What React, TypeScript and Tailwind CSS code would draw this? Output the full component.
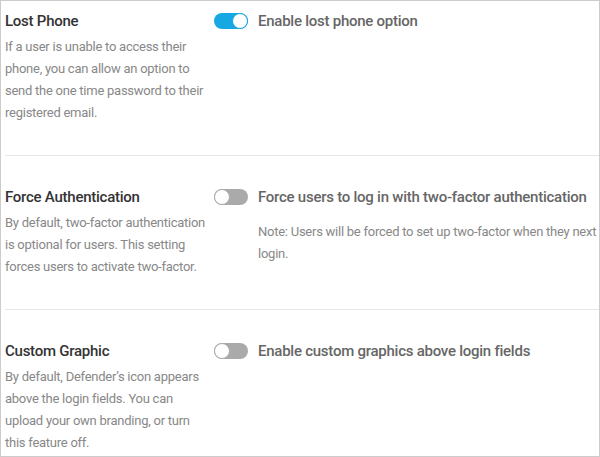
import React from "react";

function Toggle({ on }: { on: boolean }) {
  return (
    <div
      className={
        on
          ? "relative w-[34px] h-[16px] rounded-full bg-[#17a8e3] shrink-0 mt-[3px]"
          : "relative w-[34px] h-[16px] rounded-full bg-[#aaaaaa] shrink-0 mt-[3px]"
      }
    >
      <div
        className={
          on
            ? "absolute top-0 right-0 w-[16px] h-[16px] rounded-full bg-white border-[1.5px] border-[#17a8e3]"
            : "absolute top-0 left-0 w-[16px] h-[16px] rounded-full bg-white border-[1.5px] border-[#aaaaaa]"
        }
      />
    </div>
  );
}

function Row({
  title,
  desc,
  label,
  note,
  on,
  first,
  last,
}: {
  title: string;
  desc: string;
  label: string;
  note?: string;
  on: boolean;
  first?: boolean;
  last?: boolean;
}) {
  return (
    <div
      className={
        (first ? "pt-[9px] " : "pt-[30px] ") +
        (last ? "pb-[31px] " : "pb-[31px] border-b border-[#e6e6e6] ") +
        "flex"
      }
    >
      <div className="w-[204px] shrink-0 mr-[5px]">
        <div className="text-[15px] leading-[22px] font-medium tracking-[-0.25px] text-[#333333]">{title}</div>
        <div className="mt-[4px] text-[13px] leading-[22px] tracking-[-0.25px] text-[#888888]">{desc}</div>
      </div>
      <div className="flex-1 flex items-start gap-[10px] min-w-0">
        <Toggle on={on} />
        <div className="flex-1 min-w-0">
          <div className="text-[15px] leading-[22px] font-medium tracking-[-0.25px] text-[#666666]">{label}</div>
          {note && (
            <div className="mt-[13px] text-[13px] leading-[22px] tracking-[-0.25px] text-[#888888]">{note}</div>
          )}
        </div>
      </div>
    </div>
  );
}

export default function App() {
  return (
    <div
      className="w-[600px] h-[457px] overflow-hidden bg-white border border-[#cccccc] pl-[4px]"
      style={{ fontFamily: "Roboto, 'Liberation Sans', sans-serif" }}
    >
      <Row
        first
        title="Lost Phone"
        desc="If a user is unable to access their phone, you can allow an option to send the one time password to their registered email."
        label="Enable lost phone option"
        on
      />
      <Row
        title="Force Authentication"
        desc="By default, two-factor authentication is optional for users. This setting forces users to activate two-factor."
        label="Force users to log in with two-factor authentication"
        note="Note: Users will be forced to set up two-factor when they next login."
        on={false}
      />
      <Row
        last
        title="Custom Graphic"
        desc="By default, Defender’s icon appears above the login fields. You can upload your own branding, or turn this feature off."
        label="Enable custom graphics above login fields"
        on={false}
      />
    </div>
  );
}
